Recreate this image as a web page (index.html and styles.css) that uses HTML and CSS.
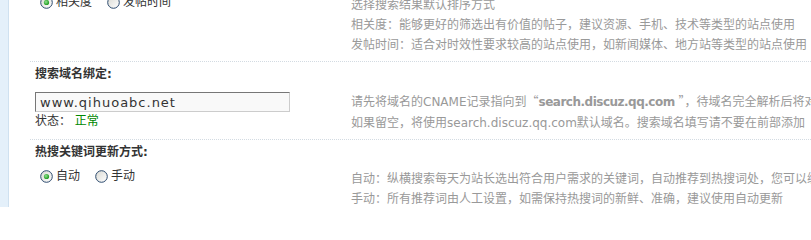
FILE: index.html
```html
<!DOCTYPE html>
<html lang="zh-CN">
<head>
<meta charset="utf-8">
<title>搜索设置</title>
<link rel="stylesheet" href="styles.css">
</head>
<body>
<svg class="defs" width="0" height="0" aria-hidden="true">
  <defs>
    <linearGradient id="rbFill" x1="0" y1="0" x2="1" y2="1">
      <stop offset="0" stop-color="#d9d9d3"/>
      <stop offset="1" stop-color="#ffffff"/>
    </linearGradient>
    <radialGradient id="rbDot" cx="0.4" cy="0.4" r="0.6">
      <stop offset="0" stop-color="#8ee28e"/>
      <stop offset="1" stop-color="#1e9a1e"/>
    </radialGradient>
  </defs>
</svg>
<div class="frame">
  <div class="side"></div>
  <div class="main">
    <div class="list">
      <div class="row first">
        <div class="form">
          <ul class="radios">
            <li><svg class="rb" width="13" height="13" viewBox="0 0 13 13"><circle cx="6.5" cy="6.5" r="5.8" fill="url(#rbFill)" stroke="#2c4a6e"/><circle cx="6.5" cy="6.5" r="2.6" fill="url(#rbDot)"/></svg>相关度</li>
            <li><svg class="rb" width="13" height="13" viewBox="0 0 13 13"><circle cx="6.5" cy="6.5" r="5.8" fill="url(#rbFill)" stroke="#2c4a6e"/></svg>发帖时间</li>
          </ul>
        </div>
        <div class="tips">
          <p>选择搜索结果默认排序方式</p>
          <p>相关度：能够更好的筛选出有价值的帖子，建议资源、手机、技术等类型的站点使用</p>
          <p>发帖时间：适合对时效性要求较高的站点使用，如新闻媒体、地方站等类型的站点使用</p>
        </div>
      </div>

      <div class="title">搜索域名绑定:</div>
      <div class="row">
        <div class="form">
          <input class="txt" type="text" value="www.qihuoabc.net">
          <div class="status">状态： <span class="ok">正常</span></div>
        </div>
        <div class="tips">
          <p>请先将域名的CNAME记录指向到<span class="q">“</span><b>search.discuz.qq.com</b> <span class="q">”</span>，待域名完全解析后将对应域名填写到这里</p>
          <p>如果留空，将使用search.discuz.qq.com默认域名。搜索域名填写请不要在前部添加<span class="q">“</span>http://<span class="q">”</span></p>
        </div>
      </div>

      <div class="title">热搜关键词更新方式:</div>
      <div class="row">
        <div class="form">
          <ul class="radios">
            <li><svg class="rb" width="13" height="13" viewBox="0 0 13 13"><circle cx="6.5" cy="6.5" r="5.8" fill="url(#rbFill)" stroke="#2c4a6e"/><circle cx="6.5" cy="6.5" r="2.6" fill="url(#rbDot)"/></svg>自动</li>
            <li><svg class="rb" width="13" height="13" viewBox="0 0 13 13"><circle cx="6.5" cy="6.5" r="5.8" fill="url(#rbFill)" stroke="#2c4a6e"/></svg>手动</li>
          </ul>
        </div>
        <div class="tips">
          <p>自动：纵横搜索每天为站长选出符合用户需求的关键词，自动推荐到热搜词处，您可以编辑</p>
          <p>手动：所有推荐词由人工设置，如需保持热搜词的新鲜、准确，建议使用自动更新</p>
        </div>
      </div>
    </div>
  </div>
</div>
</body>
</html>
```

FILE: styles.css
```css
html, body {
  margin: 0;
  padding: 0;
  background: #fff;
}
body {
  width: 811px;
  height: 207px;
  overflow: hidden;
  font: 12px "DejaVu Sans", "Noto Sans CJK SC", sans-serif;
  color: #333;
}
.defs {
  display: block;
  width: 0;
  height: 0;
}
.frame {
  display: flex;
  height: 207px;
}
.side {
  flex: none;
  width: 8px;
  background: #e4f0fa;
  border-right: 1px solid #cfe1f0;
}
.main {
  flex: 1;
  min-width: 0;
  padding-left: 21px;
  overflow: hidden;
}
.list {
  margin-top: -12px;
}
.row {
  display: flex;
  align-items: flex-start;
  white-space: nowrap;
}
.form {
  flex: none;
  width: 306px;
  padding: 0 5px;
}
.tips {
  padding: 7px 5px 6px;
  color: #999;
  line-height: 20px;
}
.tips p {
  margin: 0;
}
.tips b {
  font-weight: bold;
  letter-spacing: -0.5px;
}
.q {
  font-family: "Noto Sans CJK SC", sans-serif;
}
.radios {
  list-style: none;
  margin: 0;
  padding: 4px 0 0;
  display: flex;
  line-height: 20px;
}
.radios li {
  display: flex;
  align-items: center;
  margin-right: 10px;
}
.rb {
  flex: none;
  margin: 0 3px 0 5px;
}
.title {
  border-top: 1px dotted #d3dbe2;
  padding: 2px 5px 0;
  font-weight: bold;
  line-height: 20px;
  color: #333;
}
.txt {
  display: block;
  box-sizing: border-box;
  width: 255px;
  height: 20px;
  margin: 8px 0 0;
  padding: 0 4px;
  border: 1px solid;
  border-color: #777 #ccc #ccc #777;
  background: #f9f9f9;
  color: #333;
  font: 13px "DejaVu Sans", sans-serif;
  letter-spacing: 1px;
  outline: none;
}
.status {
  line-height: 18px;
}
.ok {
  color: #080;
}
```
